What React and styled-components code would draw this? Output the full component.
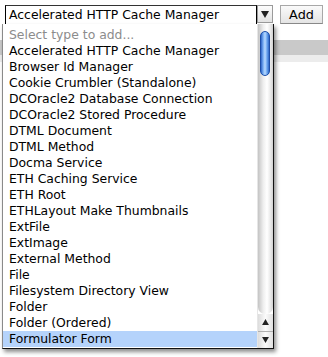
import React from "react";
import styled, { createGlobalStyle } from "styled-components";

const Global = createGlobalStyle`
  body {
    margin: 0;
    background: #fff;
    font-family: "DejaVu Sans", Verdana, sans-serif;
  }
`;

const Page = styled.div`
  position: relative;
  width: 328px;
  height: 357px;
  overflow: hidden;
  background: #fff;
`;

const Toolbar = styled.div`
  display: flex;
  align-items: flex-start;
  padding: 5px 0 0 5px;
  height: 20px;
`;

const SelectBox = styled.div`
  box-sizing: border-box;
  width: 252px;
  height: 20px;
  border: 1px solid #000;
  border-top-color: #333;
  padding-left: 3px;
  font-size: 12.4px;
  line-height: 18px;
  color: #000;
  white-space: nowrap;
  overflow: hidden;
`;

const ArrowButton = styled.div`
  box-sizing: border-box;
  width: 16px;
  height: 18px;
  border: 1px solid #9a9a9a;
  background: linear-gradient(#fdfdfd, #e2e2e2);
  display: flex;
  align-items: center;
  justify-content: center;
`;

const AddButton = styled.div`
  box-sizing: border-box;
  margin-left: 7px;
  width: 43px;
  height: 19px;
  border: 1px solid #a8a8a8;
  border-bottom-color: #888;
  background: linear-gradient(#fafafa, #e4e4e4);
  font-size: 12.8px;
  line-height: 17px;
  text-align: center;
  color: #000;
`;

const Band = styled.div`
  margin-top: 15px;
  height: 15px;
  background: #c9c9c9;
`;

const BandLight = styled.div`
  height: 7px;
  background: #ececec;
`;

const Dropdown = styled.div`
  position: absolute;
  left: 2px;
  top: 24px;
  width: 272px;
  height: 325px;
  box-sizing: border-box;
  display: flex;
  background: #fff;
  border-left: 1px solid #8a8a8a;
  border-right: 1px solid #111;
  border-bottom: 1px solid #111;
  box-shadow: 2px 3px 4px rgba(0, 0, 0, 0.45);
`;

const List = styled.div`
  flex: 1;
  padding-top: 3px;
  overflow: hidden;
`;

const Row = styled.div`
  height: 16px;
  line-height: 16px;
  padding-left: 6px;
  font-size: 12.4px;
  white-space: nowrap;
  color: ${(p) => (p.$hint ? "#8c8c8c" : "#000")};
  background: ${(p) => (p.$selected ? "#b5d3fb" : "transparent")};
`;

const Scrollbar = styled.div`
  width: 15px;
  display: flex;
  flex-direction: column;
  border-left: 1px solid #e6e6e6;
`;

const Track = styled.div`
  position: relative;
  flex: 1;
  background: linear-gradient(
    to right,
    #c4c4c4,
    #eeeeee 35%,
    #ffffff 60%,
    #e6e6e6 85%,
    #d0d0d0
  );
  border-bottom-left-radius: 7px;
  border-bottom-right-radius: 7px;
`;

const Thumb = styled.div`
  position: absolute;
  left: 2px;
  top: 7px;
  width: 10px;
  height: 45px;
  border-radius: 5px;
  border: 1px solid #1c4fa8;
  box-sizing: border-box;
  background: linear-gradient(
    to right,
    #2e66c9,
    #7fb4f5 30%,
    #b9dbff 50%,
    #6aa5f0 75%,
    #2f68c6
  );
`;

const Arrows = styled.div`
  height: 34px;
  display: flex;
  flex-direction: column;
  background: linear-gradient(to right, #dcdcdc, #fbfbfb 50%, #e0e0e0);
`;

const ArrowCell = styled.div`
  flex: 1;
  display: flex;
  align-items: center;
  justify-content: center;
  border-top: ${(p) => (p.$split ? "1px solid #b0b0b0" : "none")};
`;

const items = [
  "Accelerated HTTP Cache Manager",
  "Browser Id Manager",
  "Cookie Crumbler (Standalone)",
  "DCOracle2 Database Connection",
  "DCOracle2 Stored Procedure",
  "DTML Document",
  "DTML Method",
  "Docma Service",
  "ETH Caching Service",
  "ETH Root",
  "ETHLayout Make Thumbnails",
  "ExtFile",
  "ExtImage",
  "External Method",
  "File",
  "Filesystem Directory View",
  "Folder",
  "Folder (Ordered)",
  "Formulator Form",
];

const Tri = ({ up, size = 7 }) => (
  <svg width={size} height={size - 1} viewBox="0 0 8 7">
    <path d={up ? "M4 0 L8 7 L0 7 Z" : "M0 0 L8 0 L4 7 Z"} fill="#222" />
  </svg>
);

export default function App() {
  return (
    <Page>
      <Global />
      <Toolbar>
        <SelectBox>Accelerated HTTP Cache Manager</SelectBox>
        <ArrowButton>
          <Tri size={8} />
        </ArrowButton>
        <AddButton>Add</AddButton>
      </Toolbar>
      <Band />
      <BandLight />
      <Dropdown>
        <List>
          <Row $hint>Select type to add...</Row>
          {items.map((name, i) => (
            <Row key={name} $selected={i === items.length - 1}>
              {name}
            </Row>
          ))}
        </List>
        <Scrollbar>
          <Track>
            <Thumb />
          </Track>
          <Arrows>
            <ArrowCell>
              <Tri up />
            </ArrowCell>
            <ArrowCell $split>
              <Tri />
            </ArrowCell>
          </Arrows>
        </Scrollbar>
      </Dropdown>
    </Page>
  );
}
